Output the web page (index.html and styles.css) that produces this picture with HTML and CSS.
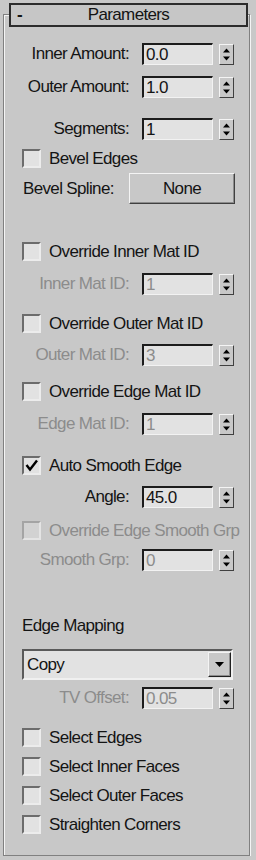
FILE: index.html
```html
<!DOCTYPE html>
<html lang="en">
<head>
    <meta charset="UTF-8">
    <meta name="viewport" content="width=device-width, initial-scale=1.0">
    <title>Parameters</title>
    <link rel="stylesheet" href="styles.css">
</head>
<body>
    <div class="rollout">
        <div class="rollout-title">
            <span class="toggle">-</span>
            <span class="title">Parameters</span>
            <span></span>
        </div>

        <!-- amounts -->
        <div class="row spin mt-16">
            <span class="spin-label">Inner Amount:</span>
            <span class="field">0.0</span>
            <span class="spinner"><svg width="13" height="19" viewBox="0 0 13 19"><path d="M3 7.5h7L6.5 3.5z"/><path d="M3 11.5h7L6.5 15.5z"/></svg></span>
        </div>
        <div class="row spin mt-11">
            <span class="spin-label">Outer Amount:</span>
            <span class="field">1.0</span>
            <span class="spinner"><svg width="13" height="19" viewBox="0 0 13 19"><path d="M3 7.5h7L6.5 3.5z"/><path d="M3 11.5h7L6.5 15.5z"/></svg></span>
        </div>
        <div class="row spin mt-20">
            <span class="spin-label">Segments:</span>
            <span class="field">1</span>
            <span class="spinner"><svg width="13" height="19" viewBox="0 0 13 19"><path d="M3 7.5h7L6.5 3.5z"/><path d="M3 11.5h7L6.5 15.5z"/></svg></span>
        </div>
        <div class="row check mt-9">
            <span class="box"></span>
            <span class="check-label">Bevel Edges</span>
        </div>
        <div class="row mt-5">
            <span class="spline-label">Bevel Spline:</span>
            <span class="button">None</span>
        </div>

        <!-- material ids -->
        <div class="row check mt-38">
            <span class="box"></span>
            <span class="check-label">Override Inner Mat ID</span>
        </div>
        <div class="row spin disabled mt-12">
            <span class="spin-label">Inner Mat ID:</span>
            <span class="field">1</span>
            <span class="spinner"><svg width="13" height="19" viewBox="0 0 13 19"><path d="M3 7.5h7L6.5 3.5z"/><path d="M3 11.5h7L6.5 15.5z"/></svg></span>
        </div>
        <div class="row check mt-19">
            <span class="box"></span>
            <span class="check-label">Override Outer Mat ID</span>
        </div>
        <div class="row spin disabled mt-11">
            <span class="spin-label">Outer Mat ID:</span>
            <span class="field">3</span>
            <span class="spinner"><svg width="13" height="19" viewBox="0 0 13 19"><path d="M3 7.5h7L6.5 3.5z"/><path d="M3 11.5h7L6.5 15.5z"/></svg></span>
        </div>
        <div class="row check mt-16">
            <span class="box"></span>
            <span class="check-label">Override Edge Mat ID</span>
        </div>
        <div class="row spin disabled mt-12">
            <span class="spin-label">Edge Mat ID:</span>
            <span class="field">1</span>
            <span class="spinner"><svg width="13" height="19" viewBox="0 0 13 19"><path d="M3 7.5h7L6.5 3.5z"/><path d="M3 11.5h7L6.5 15.5z"/></svg></span>
        </div>

        <!-- smoothing -->
        <div class="row check mt-21">
            <span class="box"><svg width="15" height="15" viewBox="0 0 15 15"><path d="M2.5 7l3.5 4.5 7-9" fill="none" stroke="#000" stroke-width="2.4"/></svg></span>
            <span class="check-label">Auto Smooth Edge</span>
        </div>
        <div class="row spin mt-11">
            <span class="spin-label">Angle:</span>
            <span class="field">45.0</span>
            <span class="spinner"><svg width="13" height="19" viewBox="0 0 13 19"><path d="M3 7.5h7L6.5 3.5z"/><path d="M3 11.5h7L6.5 15.5z"/></svg></span>
        </div>
        <div class="row check disabled mt-13">
            <span class="box"></span>
            <span class="check-label">Override Edge Smooth Grp</span>
        </div>
        <div class="row spin disabled mt-9">
            <span class="spin-label">Smooth Grp:</span>
            <span class="field">0</span>
            <span class="spinner"><svg width="13" height="19" viewBox="0 0 13 19"><path d="M3 7.5h7L6.5 3.5z"/><path d="M3 11.5h7L6.5 15.5z"/></svg></span>
        </div>

        <!-- mapping -->
        <div class="row text-row mt-45">
            <span class="group-label">Edge Mapping</span>
        </div>
        <div class="row mt-13">
            <div class="dropdown">
                <span class="dropdown-value">Copy</span>
                <span class="dropdown-arrow"><svg width="11" height="7" viewBox="0 0 11 7"><path d="M1 1h9L5.5 6z"/></svg></span>
            </div>
        </div>
        <div class="row spin disabled mt-7">
            <span class="spin-label">TV Offset:</span>
            <span class="field">0.05</span>
            <span class="spinner"><svg width="13" height="19" viewBox="0 0 13 19"><path d="M3 7.5h7L6.5 3.5z"/><path d="M3 11.5h7L6.5 15.5z"/></svg></span>
        </div>

        <!-- selection -->
        <div class="row check mt-19">
            <span class="box"></span>
            <span class="check-label">Select Edges</span>
        </div>
        <div class="row check mt-10">
            <span class="box"></span>
            <span class="check-label">Select Inner Faces</span>
        </div>
        <div class="row check mt-10">
            <span class="box"></span>
            <span class="check-label">Select Outer Faces</span>
        </div>
        <div class="row check mt-10">
            <span class="box"></span>
            <span class="check-label">Straighten Corners</span>
        </div>
    </div>
</body>
</html>
```

FILE: styles.css
```css
body {
    margin: 0;
    background-color: #c8c8c8;
    font-family: "Liberation Sans", Arial, sans-serif;
    font-size: 17px;
    letter-spacing: -0.65px;
    color: #141414;
}

.rollout {
    margin: 14px 6px 0 3px;
    height: 840px;
    border: 1px solid #808080;
    box-shadow: inset 1px 1px 0 #f4f4f4, 1px 1px 0 #f4f4f4;
}

.rollout-title {
    display: grid;
    grid-template-columns: 1fr auto 1fr;
    align-items: center;
    height: 20px;
    margin: -12px 1px 0 5px;
    border: 2px solid #2c2c2c;
    background-color: #c6c6c6;
}

.toggle {
    padding-left: 6px;
    font-weight: bold;
}

.row {
    display: flex;
    align-items: center;
}

.spin {
    height: 22px;
}

.check {
    height: 19px;
}

.text-row {
    height: 20px;
}

.mt-5 { margin-top: 5px; }
.mt-7 { margin-top: 7px; }
.mt-9 { margin-top: 9px; }
.mt-10 { margin-top: 10px; }
.mt-11 { margin-top: 11px; }
.mt-12 { margin-top: 12px; }
.mt-13 { margin-top: 13px; }
.mt-16 { margin-top: 16px; }
.mt-19 { margin-top: 19px; }
.mt-20 { margin-top: 20px; }
.mt-21 { margin-top: 21px; }
.mt-38 { margin-top: 38px; }
.mt-45 { margin-top: 45px; }

.spin-label {
    width: 125px;
    text-align: right;
}

.field {
    box-sizing: border-box;
    width: 71px;
    height: 22px;
    margin-left: 13px;
    padding-left: 2px;
    border-style: solid;
    border-width: 2px 1px 1px 2px;
    border-color: #1c1c1c #f2f2f2 #f2f2f2 #1c1c1c;
    background-color: #e2e2e2;
    line-height: 19px;
}

.spinner {
    box-sizing: border-box;
    width: 15px;
    height: 21px;
    margin-left: 6px;
    border: 1px solid;
    border-color: #f4f4f4 #404040 #404040 #f4f4f4;
    background-color: #c8c8c8;
}

.spinner svg {
    display: block;
    fill: #000;
}

.box {
    box-sizing: border-box;
    width: 19px;
    height: 19px;
    margin-left: 18px;
    border: 2px solid;
    border-color: #6c6c6c #ececec #ececec #6c6c6c;
    background-color: #e2e2e2;
}

.box svg {
    display: block;
}

.check-label {
    margin-left: 8px;
}

.disabled {
    color: #8c8c8c;
}

.disabled .box {
    border-color: #a4a4a4 #e4e4e4 #e4e4e4 #a4a4a4;
    background-color: #d2d2d2;
}

.spline-label {
    width: 106px;
    margin-left: 19px;
}

.button {
    box-sizing: border-box;
    display: flex;
    align-items: center;
    justify-content: center;
    width: 106px;
    height: 31px;
    border: 1px solid;
    border-color: #f4f4f4 #404040 #404040 #f4f4f4;
    box-shadow: inset -1px -1px 0 #8c8c8c;
}

.group-label {
    margin-left: 18px;
}

.dropdown {
    box-sizing: border-box;
    display: flex;
    align-items: center;
    justify-content: space-between;
    width: 211px;
    height: 31px;
    margin-left: 18px;
    border: 2px solid;
    border-color: #5a5a5a #f0f0f0 #f0f0f0 #5a5a5a;
    background-color: #e2e2e2;
}

.dropdown-value {
    padding-left: 3px;
}

.dropdown-arrow {
    box-sizing: border-box;
    display: flex;
    align-items: center;
    justify-content: center;
    width: 23px;
    height: 25px;
    border: 1px solid;
    border-color: #f4f4f4 #202020 #202020 #f4f4f4;
    box-shadow: inset -1px -1px 0 #8c8c8c;
    background-color: #c8c8c8;
}

.dropdown-arrow svg {
    fill: #000;
}
```
